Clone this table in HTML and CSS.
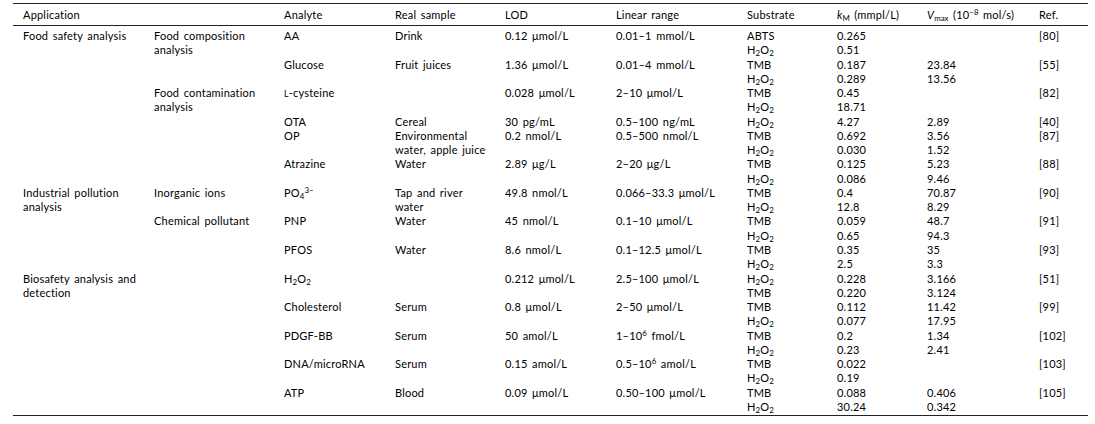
FILE: index.html
```html
<!DOCTYPE html>
<html>
<head>
<meta charset="utf-8">
<link rel="stylesheet" href="styles.css">
</head>
<body>
<table class="tbl">
<colgroup>
<col class="c1"><col class="c2"><col class="c3"><col class="c4"><col class="c5"><col class="c6"><col class="c7"><col class="c8"><col class="c9"><col class="c10">
</colgroup>
<thead>
<tr>
<th colspan="2">Application</th>
<th>Analyte</th>
<th>Real sample</th>
<th>LOD</th>
<th>Linear range</th>
<th>Substrate</th>
<th><i>k</i><sub>M</sub> (mmpl/L)</th>
<th><i>V</i><sub>max</sub> (10<sup>−8</sup> mol/s)</th>
<th>Ref.</th>
</tr>
</thead>
<tbody>
<tr class="first">
<td rowspan="11">Food safety analysis</td>
<td rowspan="4">Food composition<br>analysis</td>
<td rowspan="2">AA</td><td rowspan="2">Drink</td><td rowspan="2">0.12 μmol/L</td><td rowspan="2">0.01–1 mmol/L</td>
<td>ABTS</td><td>0.265</td><td></td><td rowspan="2">[80]</td>
</tr>
<tr><td>H<sub>2</sub>O<sub>2</sub></td><td>0.51</td><td></td></tr>
<tr>
<td rowspan="2">Glucose</td><td rowspan="2">Fruit juices</td><td rowspan="2">1.36 μmol/L</td><td rowspan="2">0.01–4 mmol/L</td>
<td>TMB</td><td>0.187</td><td>23.84</td><td rowspan="2">[55]</td>
</tr>
<tr><td>H<sub>2</sub>O<sub>2</sub></td><td>0.289</td><td>13.56</td></tr>
<tr>
<td rowspan="7">Food contamination<br>analysis</td>
<td rowspan="2"><span class="sc">L</span>-cysteine</td><td rowspan="2"></td><td rowspan="2">0.028 μmol/L</td><td rowspan="2">2–10 μmol/L</td>
<td>TMB</td><td>0.45</td><td></td><td rowspan="2">[82]</td>
</tr>
<tr><td>H<sub>2</sub>O<sub>2</sub></td><td>18.71</td><td></td></tr>
<tr>
<td>OTA</td><td>Cereal</td><td>30 pg/mL</td><td>0.5–100 ng/mL</td>
<td>H<sub>2</sub>O<sub>2</sub></td><td>4.27</td><td>2.89</td><td>[40]</td>
</tr>
<tr>
<td rowspan="2">OP</td><td rowspan="2">Environmental<br>water, apple juice</td><td rowspan="2">0.2 nmol/L</td><td rowspan="2">0.5–500 nmol/L</td>
<td>TMB</td><td>0.692</td><td>3.56</td><td rowspan="2">[87]</td>
</tr>
<tr><td>H<sub>2</sub>O<sub>2</sub></td><td>0.030</td><td>1.52</td></tr>
<tr>
<td rowspan="2">Atrazine</td><td rowspan="2">Water</td><td rowspan="2">2.89 μg/L</td><td rowspan="2">2–20 μg/L</td>
<td>TMB</td><td>0.125</td><td>5.23</td><td rowspan="2">[88]</td>
</tr>
<tr><td>H<sub>2</sub>O<sub>2</sub></td><td>0.086</td><td>9.46</td></tr>
<tr>
<td rowspan="6">Industrial pollution<br>analysis</td>
<td rowspan="2">Inorganic ions</td>
<td rowspan="2">PO<sub>4</sub><sup>3−</sup></td><td rowspan="2">Tap and river<br>water</td><td rowspan="2">49.8 nmol/L</td><td rowspan="2">0.066–33.3 μmol/L</td>
<td>TMB</td><td>0.4</td><td>70.87</td><td rowspan="2">[90]</td>
</tr>
<tr><td>H<sub>2</sub>O<sub>2</sub></td><td>12.8</td><td>8.29</td></tr>
<tr>
<td rowspan="4">Chemical pollutant</td>
<td rowspan="2">PNP</td><td rowspan="2">Water</td><td rowspan="2">45 nmol/L</td><td rowspan="2">0.1–10 μmol/L</td>
<td>TMB</td><td>0.059</td><td>48.7</td><td rowspan="2">[91]</td>
</tr>
<tr><td>H<sub>2</sub>O<sub>2</sub></td><td>0.65</td><td>94.3</td></tr>
<tr>
<td rowspan="2">PFOS</td><td rowspan="2">Water</td><td rowspan="2">8.6 nmol/L</td><td rowspan="2">0.1–12.5 μmol/L</td>
<td>TMB</td><td>0.35</td><td>35</td><td rowspan="2">[93]</td>
</tr>
<tr><td>H<sub>2</sub>O<sub>2</sub></td><td>2.5</td><td>3.3</td></tr>
<tr>
<td rowspan="10">Biosafety analysis and<br>detection</td>
<td rowspan="10"></td>
<td rowspan="2">H<sub>2</sub>O<sub>2</sub></td><td rowspan="2"></td><td rowspan="2">0.212 μmol/L</td><td rowspan="2">2.5–100 μmol/L</td>
<td>H<sub>2</sub>O<sub>2</sub></td><td>0.228</td><td>3.166</td><td rowspan="2">[51]</td>
</tr>
<tr><td>TMB</td><td>0.220</td><td>3.124</td></tr>
<tr>
<td rowspan="2">Cholesterol</td><td rowspan="2">Serum</td><td rowspan="2">0.8 μmol/L</td><td rowspan="2">2–50 μmol/L</td>
<td>TMB</td><td>0.112</td><td>11.42</td><td rowspan="2">[99]</td>
</tr>
<tr><td>H<sub>2</sub>O<sub>2</sub></td><td>0.077</td><td>17.95</td></tr>
<tr>
<td rowspan="2">PDGF-BB</td><td rowspan="2">Serum</td><td rowspan="2">50 amol/L</td><td rowspan="2">1–10<sup>6</sup> fmol/L</td>
<td>TMB</td><td>0.2</td><td>1.34</td><td rowspan="2">[102]</td>
</tr>
<tr><td>H<sub>2</sub>O<sub>2</sub></td><td>0.23</td><td>2.41</td></tr>
<tr>
<td rowspan="2">DNA/microRNA</td><td rowspan="2">Serum</td><td rowspan="2">0.15 amol/L</td><td rowspan="2">0.5–10<sup>6</sup> amol/L</td>
<td>TMB</td><td>0.022</td><td></td><td rowspan="2">[103]</td>
</tr>
<tr><td>H<sub>2</sub>O<sub>2</sub></td><td>0.19</td><td></td></tr>
<tr>
<td rowspan="2">ATP</td><td rowspan="2">Blood</td><td rowspan="2">0.09 μmol/L</td><td rowspan="2">0.50–100 μmol/L</td>
<td>TMB</td><td>0.088</td><td>0.406</td><td rowspan="2">[105]</td>
</tr>
<tr class="last"><td>H<sub>2</sub>O<sub>2</sub></td><td>30.24</td><td>0.342</td></tr>
</tbody>
</table>
</body>
</html>
```

FILE: styles.css
```css
html, body {
  margin: 0;
  padding: 0;
  background: #fff;
}
body {
  font-family: Lato, "Open Sans", sans-serif;
  font-size: 11px;
  letter-spacing: 0.2px;
  word-spacing: 1.5px;
  color: #000;
}
.tbl {
  border-collapse: collapse;
  table-layout: fixed;
  width: 1075px;
  margin: 3px 0 0 13px;
  border-top: 1px solid #222;
  border-bottom: 1px solid #222;
}
.c1 { width: 131px; }
.c2 { width: 130px; }
.c3 { width: 111px; }
.c4 { width: 110px; }
.c5 { width: 111px; }
.c6 { width: 131px; }
.c7 { width: 90px; }
.c8 { width: 90px; }
.c9 { width: 112px; }
.c10 { width: 59px; }
.tbl th {
  font-weight: normal;
  text-align: left;
  padding: 0 0 0 10px;
  height: 21px;
  line-height: 21px;
  vertical-align: middle;
  border-bottom: 1px solid #222;
  white-space: nowrap;
}
.tbl td {
  padding: 0 0 0 10px;
  height: 14.27px;
  line-height: 14.27px;
  vertical-align: top;
  white-space: nowrap;
}
.tbl tr.first td {
  padding-top: 3px;
}
.tbl tr.last td {
  padding-bottom: 1px;
}
sub, sup {
  font-size: 0.72em;
  line-height: 0;
  letter-spacing: 0;
}
sub {
  vertical-align: -0.3em;
}
sup {
  vertical-align: 0.5em;
}
.sc {
  font-size: 0.8em;
}
```
